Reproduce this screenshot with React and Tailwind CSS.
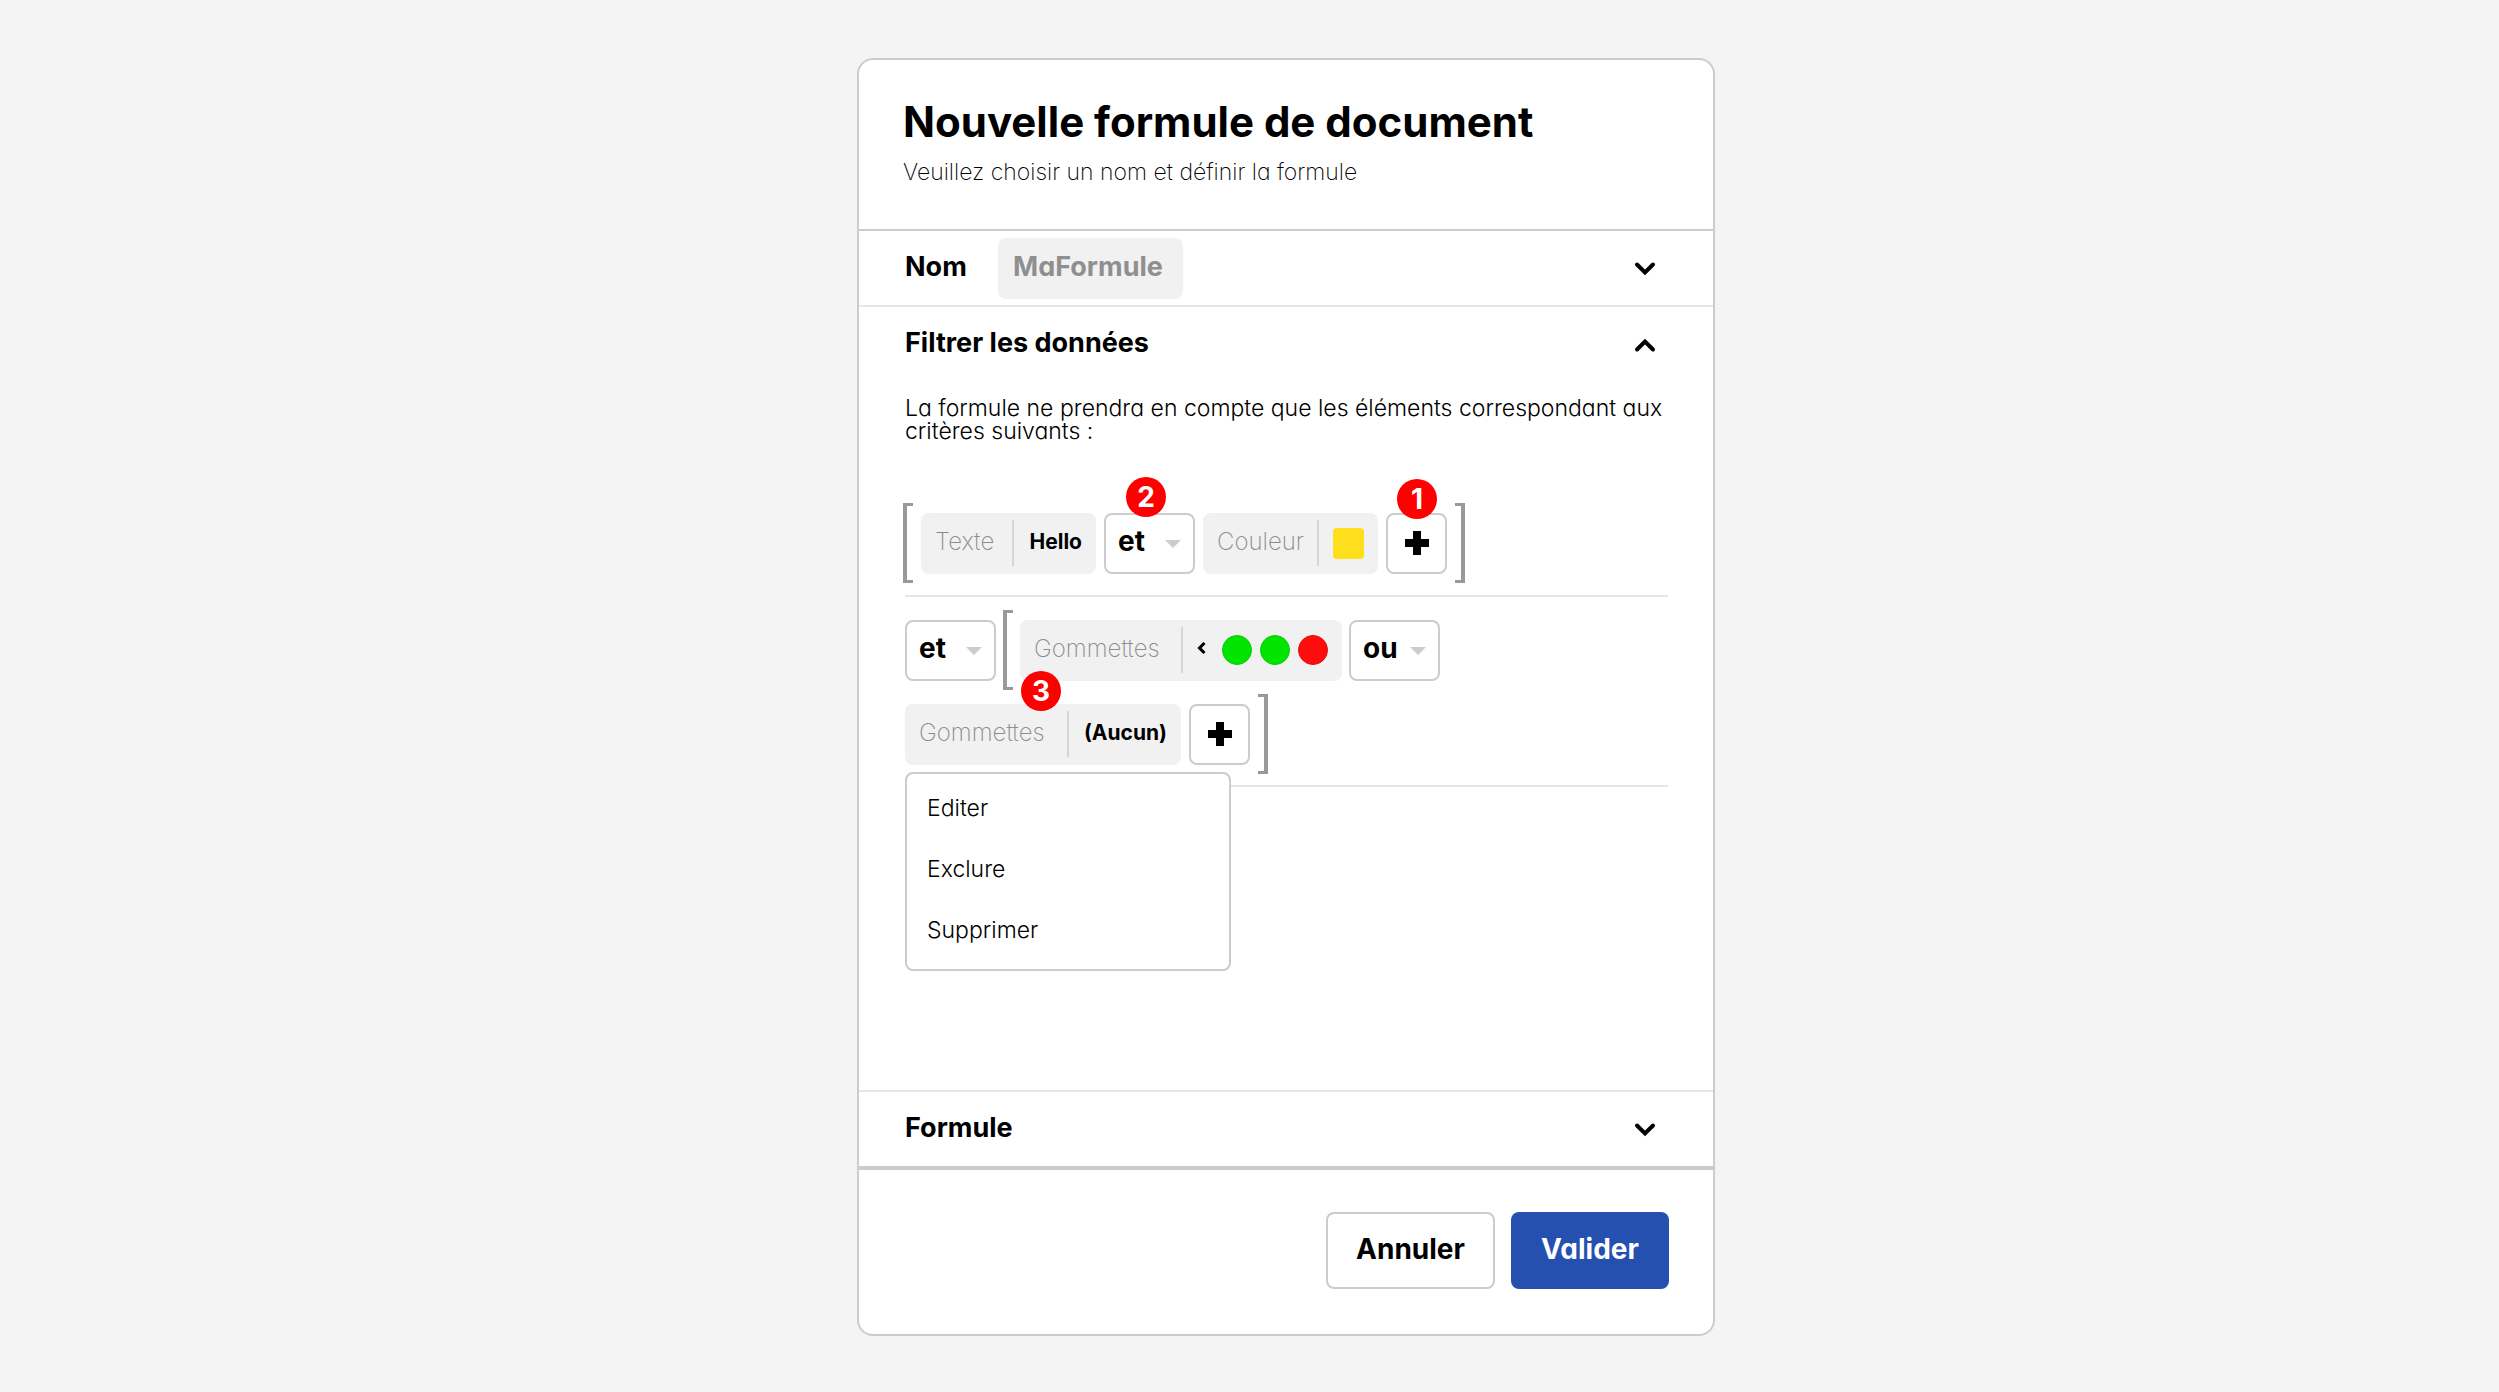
import React from "react";

function Chevron({ up }) {
  return (
    <svg width="22" height="16" viewBox="0 0 22 16" fill="none" aria-hidden="true" className="mt-0.5">
      <path
        d={up ? "M3 12.5L11 4.5L19 12.5" : "M3 3.5L11 11.5L19 3.5"}
        stroke="#000"
        strokeWidth="4"
        strokeLinecap="round"
      />
    </svg>
  );
}

function Bracket({ right }) {
  return (
    <span
      aria-hidden="true"
      className={
        right
          ? "h-20 w-2.5 shrink-0 border-y-3 border-r-4 border-[#999]"
          : "h-20 w-2.5 shrink-0 border-y-3 border-l-4 border-[#999]"
      }
    />
  );
}

function Badge({ children, className }) {
  return (
    <span
      className={`absolute z-10 flex size-10 items-center justify-center rounded-full bg-[#ff0000] text-[28px] leading-none font-bold text-white ${className}`}
    >
      {children}
    </span>
  );
}

function Chip({ name, label, width, children }) {
  return (
    <button
      type="button"
      aria-label={label}
      className={`flex h-[61px] shrink-0 items-center rounded-lg bg-[#f1f1f1] px-3.5 text-[24px] ${width}`}
    >
      <span className="pb-0.5 font-extralight text-[#8c8c8c]">{name}</span>
      <span className="ml-auto h-[46px] w-0.5 bg-[#d6d6d6]" />
      {children}
    </button>
  );
}

function Operator({ label, value }) {
  return (
    <span className="relative flex h-[61px] w-[91px] shrink-0">
      <select
        aria-label={label}
        defaultValue={value}
        className="w-full appearance-none rounded-lg border-2 border-[#ccc] bg-white pb-1 pl-3 text-[28px] font-bold"
      >
        <option value="et">et</option>
        <option value="ou">ou</option>
      </select>
      <svg
        width="16"
        height="8"
        viewBox="0 0 16 8"
        aria-hidden="true"
        className="pointer-events-none absolute top-[27px] right-3.5"
      >
        <path d="M0 0H16L8 8Z" fill="#ccc" />
      </svg>
    </span>
  );
}

function AddButton() {
  return (
    <button
      type="button"
      aria-label="Ajouter un critère"
      className="flex size-[61px] shrink-0 items-center justify-center rounded-lg border-2 border-[#ccc] bg-white"
    >
      <svg width="24" height="24" viewBox="0 0 24 24" aria-hidden="true">
        <path d="M8 0H16V8H24V16H16V24H8V16H0V8H8Z" fill="#000" />
      </svg>
    </button>
  );
}

function SectionToggle({ title, open }) {
  return (
    <button type="button" aria-expanded={open} className="flex h-[74px] w-full items-center justify-between pr-[57px] pl-[46px]">
      <span className="pb-0.5 text-[27px] font-bold">{title}</span>
      <Chevron up={open} />
    </button>
  );
}

export default function App() {
  return (
    <main className="flex min-h-screen items-start justify-center bg-[#f4f4f4] py-[58px] pl-[73px] font-[Inter,'Liberation_Sans',sans-serif] text-black [font-feature-settings:'cv11']">
      <form className="w-full max-w-[858px] rounded-2xl border-2 border-[#ccc] bg-white" onSubmit={(e) => e.preventDefault()}>
        <header className="h-[171px] border-b-2 border-[#ccc] px-11 pt-9">
          <h1 className="text-[42px] leading-[52px] font-bold">Nouvelle formule de document</h1>
          <p className="mt-2 text-[23px] leading-[32px] font-extralight">
            Veuillez choisir un nom et définir la formule
          </p>
        </header>

        <section className="flex h-[76px] items-center border-b-2 border-[#e6e6e6] pr-[57px] pl-[46px]">
          <label htmlFor="nom" className="w-[93px] pb-0.5 text-[27px] font-bold">
            Nom
          </label>
          <input
            id="nom"
            defaultValue="MaFormule"
            className="h-[61px] w-[185px] rounded-lg bg-[#f1f1f1] px-[15px] pb-1 text-[27px] font-bold text-[#8f8f8f]"
          />
          <button type="button" aria-label="Déplier le nom" className="ml-auto">
            <Chevron />
          </button>
        </section>

        <section className="h-[785px] border-b-2 border-[#e6e6e6]">
          <SectionToggle title="Filtrer les données" open />
          <div className="pr-[45px] pl-[46px]">
            <p className="mt-4 text-[23px] leading-[23px] font-light">
              La formule ne prendra en compte que les éléments correspondant aux critères suivants :
            </p>

            <div className="mt-[60px] border-b-2 border-[#e6e6e6] pb-3">
              <div className="-ml-0.5 flex items-center gap-2">
                <Bracket />
                <Chip name="Texte" label="Texte : Hello" width="w-[175px]">
                  <span className="w-[68px] pb-0.5 text-right text-[21px] font-bold">Hello</span>
                </Chip>
                <span className="relative flex">
                  <Badge className="-top-9 left-[22px]">2</Badge>
                  <Operator label="Opérateur entre texte et couleur" value="et" />
                </span>
                <Chip name="Couleur" label="Couleur : jaune" width="w-[175px]">
                  <span className="ml-3.5 size-[31px] rounded bg-[#ffde1c]" />
                </Chip>
                <span className="relative flex">
                  <Badge className="-top-[34px] left-[11px]">1</Badge>
                  <AddButton />
                </span>
                <Bracket right />
              </div>
            </div>

            <div className="relative border-b-2 border-[#e6e6e6] pt-[13px] pb-[11px]">
              <div className="flex h-20 items-center gap-[7px]">
                <Operator label="Opérateur entre groupes" value="et" />
                <Bracket />
                <Chip name="Gommettes" label="Gommettes inférieures à vert, vert, rouge" width="w-[322px]">
                  <span className="ml-3.5 flex items-center gap-2">
                    <svg width="9" height="12" viewBox="0 0 9 12" fill="none" aria-hidden="true" className="mr-2 mb-1">
                      <path d="M7.5 1L2.5 6L7.5 11" stroke="#000" strokeWidth="3" />
                    </svg>
                    <span className="size-[30px] rounded-full border border-[#00d000] bg-[#00e400]" />
                    <span className="size-[30px] rounded-full border border-[#00d000] bg-[#00e400]" />
                    <span className="size-[30px] rounded-full border border-[#e80c0c] bg-[#ff0c0c]" />
                  </span>
                </Chip>
                <Operator label="Opérateur entre gommettes" value="ou" />
              </div>
              <div className="mt-1 flex h-20 items-center gap-2">
                <span className="relative flex">
                  <Badge className="-top-[33px] left-[116px]">3</Badge>
                  <Chip name="Gommettes" label="Gommettes : aucun" width="w-[276px]">
                    <span className="w-[98px] pb-0.5 text-right text-[21px] font-bold">(Aucun)</span>
                  </Chip>
                </span>
                <AddButton />
                <Bracket right />
              </div>
              <ul
                role="menu"
                className="absolute top-[175px] left-0 w-[326px] rounded-lg border-2 border-[#ccc] bg-white px-5 py-1.5 text-[23px] font-light"
              >
                {["Editer", "Exclure", "Supprimer"].map((item) => (
                  <li key={item} role="none">
                    <button type="button" role="menuitem" className="h-[61px] w-full pb-1 text-left">
                      {item}
                    </button>
                  </li>
                ))}
              </ul>
            </div>
          </div>
        </section>

        <section className="border-b-4 border-[#ccc]">
          <SectionToggle title="Formule" open={false} />
        </section>

        <footer className="flex justify-end gap-4 px-11 pt-[42px] pb-[45px]">
          <button type="button" className="h-[77px] w-[169px] rounded-lg border-2 border-[#ccc] pb-1 text-[28px] font-bold">
            Annuler
          </button>
          <button type="submit" className="h-[77px] w-[158px] rounded-lg bg-[#2550b0] pb-1 text-[28px] font-bold text-white">
            Valider
          </button>
        </footer>
      </form>
    </main>
  );
}
